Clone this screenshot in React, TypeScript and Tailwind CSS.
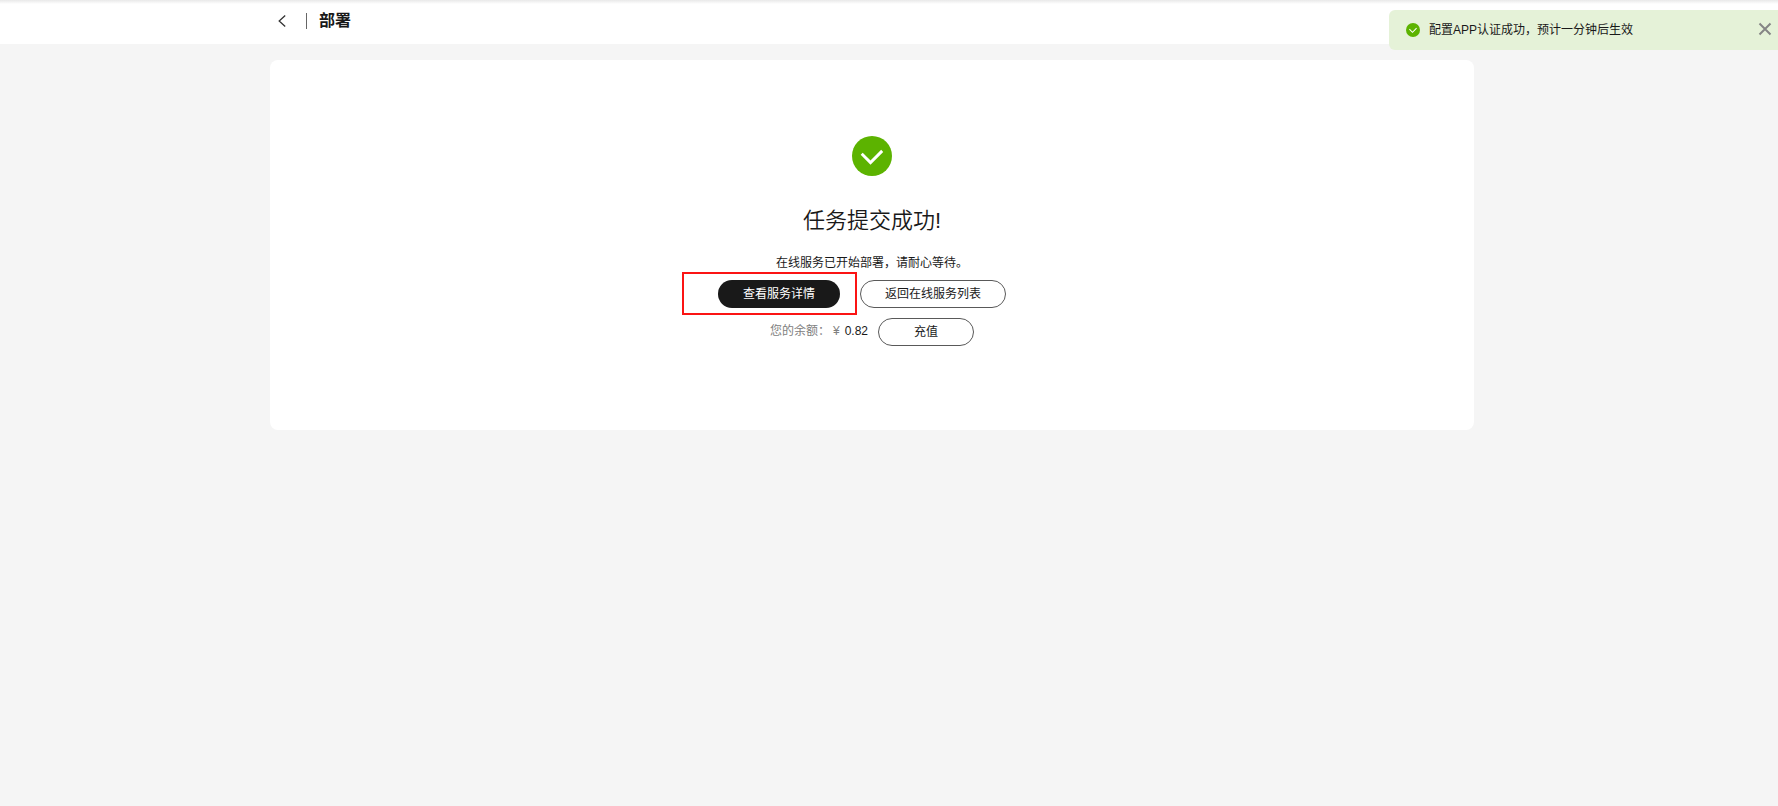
import { useState } from "react";

function CheckCircle({ className }: { className: string }) {
  return (
    <svg viewBox="0 0 40 40" className={className} aria-hidden="true">
      <circle cx="20" cy="20" r="20" fill="#5cb300" />
      <path d="M9.7 17.8 18.5 26.6 30.2 14.9" fill="none" stroke="#fff" strokeWidth="2.9" />
    </svg>
  );
}

function Toast({ onClose }: { onClose: () => void }) {
  return (
    <div
      role="status"
      className="fixed top-2.5 right-0 flex h-10 w-[389px] items-center rounded-l-md bg-[#e5f2d8] pl-[17px] pr-1.5 text-xs text-[#191919]"
    >
      <CheckCircle className="size-3.5" />
      <span className="ml-[9px] flex-1">配置APP认证成功，预计一分钟后生效</span>
      <button type="button" aria-label="关闭" onClick={onClose} className="cursor-pointer pb-0.5">
        <svg viewBox="0 0 14 14" className="size-3.5" fill="none" stroke="#858585" strokeWidth="2">
          <path d="M1.5 1.5 12.5 12.5M12.5 1.5 1.5 12.5" />
        </svg>
      </button>
    </div>
  );
}

const outlineButton =
  "h-7 cursor-pointer rounded-full border border-[#595959] bg-white text-xs text-[#191919]";

export default function App() {
  const [toastOpen, setToastOpen] = useState(true);

  return (
    <div className="min-h-screen bg-[#f5f5f5] font-['Liberation_Sans','Noto_Sans_CJK_SC',sans-serif] text-[#191919]">
      <header className="h-11 bg-white bg-linear-to-b from-[#e9e9e9] to-white to-[4px] pr-[34px]">
        <div className="mx-auto flex h-[42px] max-w-[1204px] items-center pl-2">
          <button type="button" aria-label="返回" className="cursor-pointer">
            <svg viewBox="0 0 8 12" className="h-3 w-2" fill="none" stroke="#333" strokeWidth="1.3">
              <path d="M7.2.5 1.2 6 7.2 11.5" />
            </svg>
          </button>
          <span className="ml-5 h-4 w-px bg-[#666]" />
          <h1 className="ml-3 text-base font-bold">部署</h1>
        </div>
      </header>

      <main className="pt-4 pr-[34px]">
        <section className="mx-auto flex h-[370px] max-w-[1204px] flex-col items-center rounded-lg bg-white pt-[76px]">
          <CheckCircle className="size-10" />
          <h2 className="mt-7 text-[22px] leading-[34px] font-[350]">任务提交成功!</h2>
          <p className="mt-[15px] text-xs leading-5">在线服务已开始部署，请耐心等待。</p>

          <div className="mt-[7px] flex items-center gap-5 pr-5">
            <div className="relative">
              <button
                type="button"
                className="block h-7 cursor-pointer rounded-full bg-[#191919] px-[25px] text-xs text-white"
              >
                查看服务详情
              </button>
              <span className="pointer-events-none absolute -top-2 -right-[17px] -bottom-[7px] -left-9 border-2 border-[#fb1414]" />
            </div>
            <button type="button" className={`${outlineButton} px-6`}>
              返回在线服务列表
            </button>
          </div>

          <div className="mt-2.5 flex items-center text-xs">
            <p className="flex pb-0.5">
              <span className="text-[#808080]">您的余额：</span>
              <span className="ml-[3px] text-[#808080]">¥</span>
              <span className="ml-[5px]">0.82</span>
            </p>
            <button type="button" className={`${outlineButton} ml-2.5 px-[35px]`}>
              充值
            </button>
          </div>
        </section>
      </main>

      {toastOpen && <Toast onClose={() => setToastOpen(false)} />}
    </div>
  );
}
